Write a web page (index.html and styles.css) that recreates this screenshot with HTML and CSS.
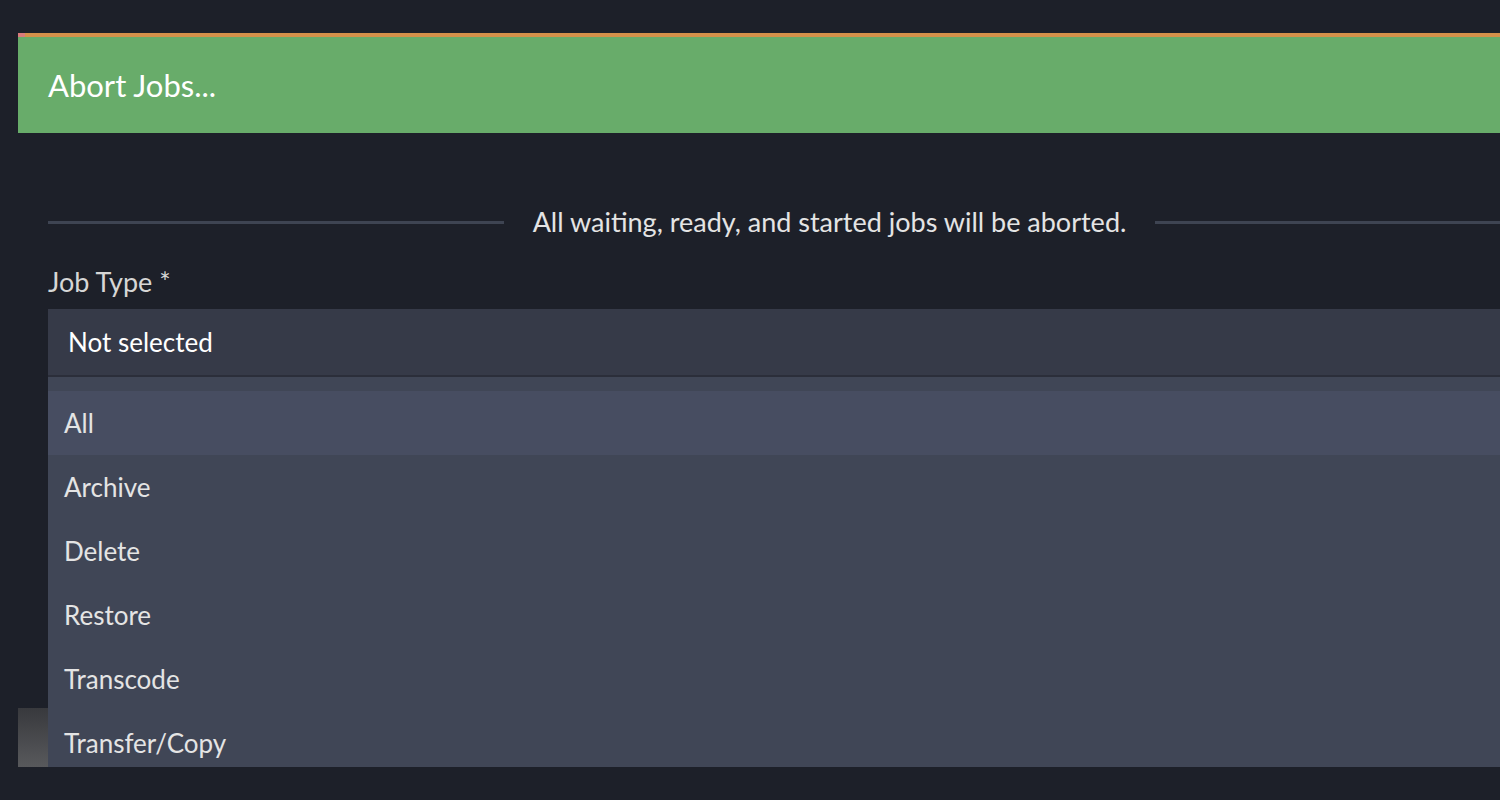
FILE: index.html
```html
<!DOCTYPE html>
<html lang="en">
<head>
<meta charset="utf-8">
<title>Abort Jobs</title>
<link rel="stylesheet" href="styles.css">
</head>
<body>
<div class="page">
  <div class="dialog">
    <div class="progress"></div>
    <div class="dialog-header">
      <h1 class="dialog-title">Abort Jobs...</h1>
    </div>
    <div class="dialog-body">
      <div class="divider">
        <span class="divider-line"></span>
        <span class="divider-text">All waiting, ready, and started jobs will be aborted.</span>
        <span class="divider-line"></span>
      </div>
      <div class="field">
        <label class="field-label">Job Type *</label>
        <div class="select-wrap">
          <div class="select">Not selected</div>
          <ul class="dropdown">
            <li class="option active">All</li>
            <li class="option">Archive</li>
            <li class="option">Delete</li>
            <li class="option">Restore</li>
            <li class="option">Transcode</li>
            <li class="option">Transfer/Copy</li>
          </ul>
        </div>
      </div>
    </div>
    <div class="dialog-footer"></div>
  </div>
</div>
</body>
</html>
```
FILE: styles.css
```css
* { box-sizing: border-box; }
html, body {
  margin: 0;
  padding: 0;
  background: #1d2029;
  overflow: hidden;
}
body {
  font-family: Lato, "Noto Sans", sans-serif;
  color: #e6e6e6;
}
.page {
  padding: 33px 0 0 18px;
  width: 100%;
  height: 800px;
  overflow: hidden;
}
.dialog {
  width: 1623px;
  height: 734px;
  overflow: hidden;
  position: relative;
  display: flex;
  flex-direction: column;
  background: #1d2029;
}
.progress {
  height: 4px;
  flex: none;
  background: linear-gradient(to right, #d97b7b 0 7px, #d4914a 7px 100%);
}
.dialog-header {
  flex: none;
  height: 96px;
  background: #68ac6a;
  display: flex;
  align-items: center;
  padding-left: 30px;
}
.dialog-title {
  margin: 0;
  font-size: 31px;
  font-weight: 400;
  line-height: 36px;
  color: #ffffff;
}
.dialog-body {
  flex: 1;
  padding: 73px 30px 0 30px;
}
.divider {
  display: flex;
  align-items: center;
  gap: 29px;
  height: 32px;
}
.divider-line {
  flex: 1;
  height: 3px;
  background: #3e4452;
}
.divider-text {
  font-size: 27px;
  line-height: 32px;
  color: #e4e4e4;
  white-space: nowrap;
}
.field {
  margin-top: 28px;
}
.field-label {
  display: block;
  font-size: 27px;
  line-height: 32px;
  color: #d6d6d6;
}
.select-wrap {
  position: relative;
  margin-top: 11px;
}
.select {
  height: 66px;
  background: #363a48;
  padding: 17px 20px;
  font-size: 26px;
  line-height: 32px;
  color: #ffffff;
}
.dropdown {
  position: absolute;
  left: 0;
  right: 0;
  top: 100%;
  margin: 0;
  padding: 14px 0 0 0;
  list-style: none;
  background: #404656;
  border-top: 2px solid #2b2e3a;
  z-index: 2;
}
.option {
  height: 64px;
  padding: 16px 16px;
  font-size: 26px;
  line-height: 32px;
  color: #e4e4e4;
}
.option.active {
  background: #474d61;
}
.dialog-footer {
  flex: none;
  height: 59px;
  background: linear-gradient(to bottom, #38393d, #58595c);
}
```
